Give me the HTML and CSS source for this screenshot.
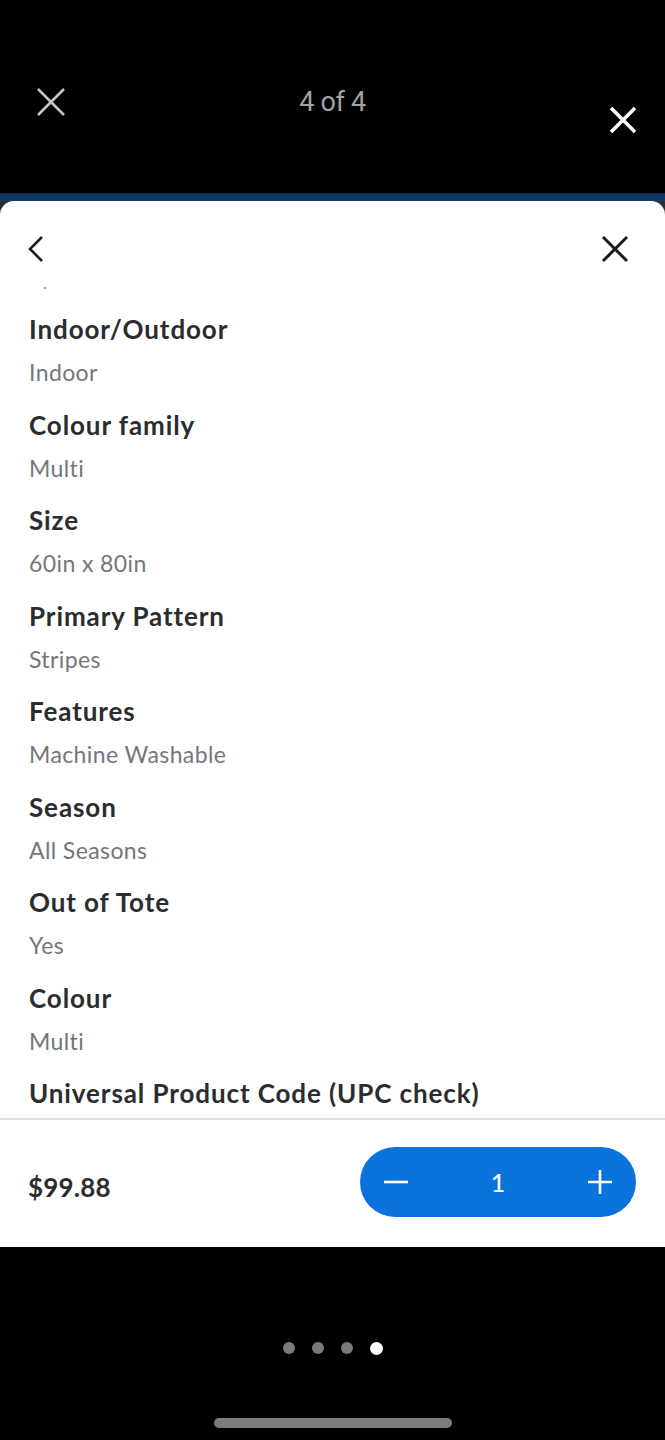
FILE: index.html
```html
<!DOCTYPE html>
<html>
<head>
<meta charset="utf-8">
<link rel="stylesheet" href="styles.css">
</head>
<body>
<div class="screen">
  <div class="topbar">
    <svg class="top-x" width="30" height="30" viewBox="0 0 30 30"><path d="M2 2L28 28M28 2L2 28" stroke="#c4c4c4" stroke-width="2.6" fill="none"/></svg>
    <div class="counter">4 of 4</div>
    <svg class="top-x2" width="28" height="28" viewBox="0 0 28 28"><path d="M2 2L26 26M26 2L2 26" stroke="#fff" stroke-width="3.6" fill="none"/></svg>
  </div>
  <div class="strip"></div>
  <div class="card-wrap">
    <div class="card">
      <div class="card-head">
        <svg width="18" height="28" viewBox="0 0 18 28"><path d="M15 2L3 14L15 26" stroke="#1c1c1c" stroke-width="2.6" fill="none"/></svg>
        <svg width="30" height="30" viewBox="0 0 30 30"><path d="M3 3L27 27M27 3L3 27" stroke="#1c1c1c" stroke-width="3" fill="none"/></svg>
      </div>
      <div class="specs">
        <div class="crumb"><span class="dot"></span></div>
        <div class="item"><div class="label">Indoor/Outdoor</div><div class="value">Indoor</div></div>
        <div class="item"><div class="label">Colour family</div><div class="value">Multi</div></div>
        <div class="item"><div class="label">Size</div><div class="value">60in x 80in</div></div>
        <div class="item"><div class="label">Primary Pattern</div><div class="value">Stripes</div></div>
        <div class="item"><div class="label">Features</div><div class="value">Machine Washable</div></div>
        <div class="item"><div class="label">Season</div><div class="value">All Seasons</div></div>
        <div class="item"><div class="label">Out of Tote</div><div class="value">Yes</div></div>
        <div class="item"><div class="label">Colour</div><div class="value">Multi</div></div>
        <div class="item"><div class="label">Universal Product Code (UPC check)</div></div>
      </div>
      <div class="footer">
        <div class="price">$99.88</div>
        <div class="stepper">
          <svg width="26" height="26" viewBox="0 0 26 26"><path d="M1 13H25" stroke="#fff" stroke-width="2.6"/></svg>
          <span class="qty">1</span>
          <svg width="26" height="26" viewBox="0 0 26 26"><path d="M1 13H25M13 1V25" stroke="#fff" stroke-width="2.6"/></svg>
        </div>
      </div>
    </div>
  </div>
  <div class="pager">
    <span class="pdot"></span><span class="pdot"></span><span class="pdot"></span><span class="pdot active"></span>
  </div>
  <div class="home"></div>
</div>
</body>
</html>
```
FILE: styles.css
```css
html, body {
  margin: 0;
  padding: 0;
  background: #000;
}
.screen {
  width: 665px;
  height: 1440px;
  background: #000;
  display: flex;
  flex-direction: column;
  overflow: hidden;
}
.topbar {
  height: 193px;
  display: grid;
  grid-template-columns: 1fr auto 1fr;
  align-items: start;
  padding: 0 28px 0 36px;
  box-sizing: border-box;
}
.top-x {
  margin-top: 87px;
}
.counter {
  margin-top: 85px;
  margin-right: 8px;
  font-family: Roboto, "Liberation Sans", sans-serif;
  font-size: 27px;
  line-height: 34px;
  color: #a3a3a3;
  letter-spacing: -0.3px;
}
.top-x2 {
  justify-self: end;
  margin-top: 106px;
}
.strip {
  height: 8px;
  background: linear-gradient(#0a2f57, #0f3d6e);
}
.card-wrap {
  background: #2a2f36;
}
.card {
  background: #fff;
  border-radius: 14px 14px 0 0;
  height: 1046px;
  display: flex;
  flex-direction: column;
  font-family: Lato, "Open Sans", sans-serif;
}
.card-head {
  height: 84px;
  display: flex;
  justify-content: space-between;
  align-items: center;
  padding: 12px 35px 0 27px;
  box-sizing: border-box;
}
.specs {
  height: 833px;
  overflow: hidden;
  padding: 0 29px;
  border-bottom: 2px solid #dedede;
}
.crumb {
  height: 22px;
  position: relative;
}
.dot {
  position: absolute;
  left: 15px;
  top: 2px;
  width: 2px;
  height: 2px;
  background: #888;
  border-radius: 50%;
}
.item {
  display: flex;
  flex-direction: column;
}
.label {
  font-weight: 700;
  font-size: 26px;
  letter-spacing: 0.9px;
  line-height: 44px;
  color: #2b2c2f;
}
.value {
  font-size: 23px;
  letter-spacing: 0.4px;
  line-height: 43.5px;
  padding-bottom: 8px;
  color: #74767c;
}
.footer {
  flex: 1;
  display: flex;
  justify-content: space-between;
  align-items: center;
  padding: 0 29px 4px 28px;
}
.price {
  font-weight: 700;
  font-size: 26px;
  letter-spacing: 0.2px;
  color: #2b2c2f;
  padding-top: 10px;
}
.stepper {
  width: 276px;
  height: 70px;
  border-radius: 35px;
  background: #0b72dc;
  display: flex;
  align-items: center;
  justify-content: space-between;
  padding: 0 23px;
  box-sizing: border-box;
}
.qty {
  color: #fff;
  font-size: 25px;
  font-weight: 500;
}
.pager {
  display: flex;
  justify-content: center;
  gap: 17px;
  margin-top: 95px;
  padding-left: 1px;
}
.pdot {
  width: 12px;
  height: 12px;
  border-radius: 50%;
  background: #7a7a7a;
}
.pdot.active {
  background: #fff;
  width: 13px;
  height: 13px;
  margin-top: -0.5px;
}
.home {
  width: 238px;
  height: 10px;
  border-radius: 5px;
  background: #7c7c7c;
  align-self: center;
  margin-top: 63px;
}
```
